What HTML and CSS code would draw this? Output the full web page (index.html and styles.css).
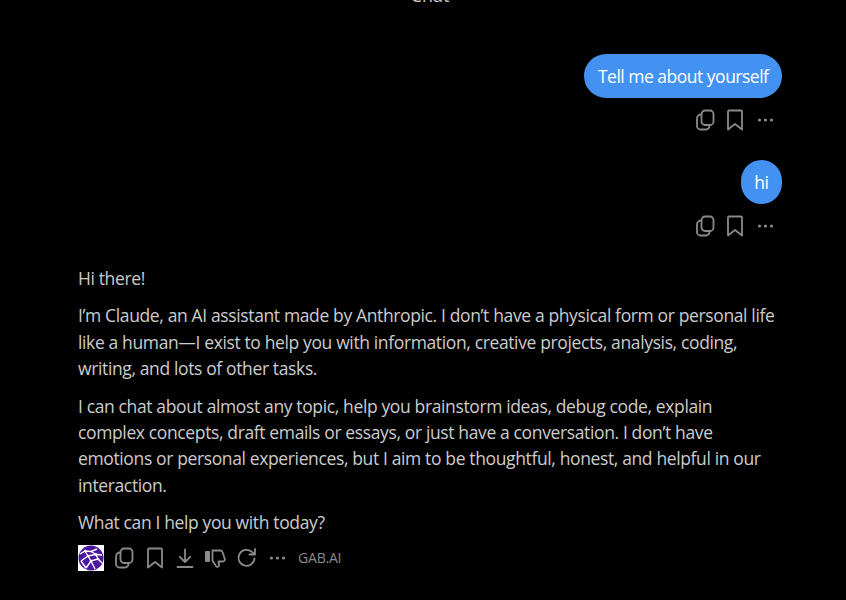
FILE: index.html
```html
<!DOCTYPE html>
<html lang="en">
    <head>
        <title>Chat</title>
        <link rel="stylesheet" href="styles.css">
    </head>
    <body>
        <svg class="defs" width="0" height="0">
            <symbol id="i-copy" viewBox="0 0 20 22">
                <rect x="6.5" y="1.5" width="12" height="14.5" rx="3.5"/>
                <path d="M6.5 5.500h-.5a4 4 0 0 0-4 4v7.500a3.500 3.500 0 0 0 3.500 3.500h5.500a3.500 3.500 0 0 0 3.500-3.500v-1"/>
            </symbol>
            <symbol id="i-mark" viewBox="0 0 18 22">
                <path d="M2 2.500a1 1 0 0 1 1-1h12a1 1 0 0 1 1 1v18l-7-5.500-7 5.500z"/>
            </symbol>
            <symbol id="i-dots" viewBox="0 0 18 6">
                <circle class="solid" cx="3.500" cy="3" r="1.600"/>
                <circle class="solid" cx="9.500" cy="3" r="1.600"/>
                <circle class="solid" cx="15.500" cy="3" r="1.600"/>
            </symbol>
            <symbol id="i-down" viewBox="0 0 18 22">
                <path d="M9 2.500v12M3.800 9.800 9 15l5.200-5.200M1.500 20h15"/>
            </symbol>
            <symbol id="i-thumb" viewBox="0 0 22 22">
                <rect class="solid" x="1" y="4" width="5" height="11" rx="1"/>
                <path d="M8.500 3.500h7.500a2.500 2.500 0 0 1 2.500 1.500l2.300 7a2 2 0 0 1-2 2.500h-4.300l.6 3.500c.2 1.500-1.900 2.600-2.900 1.300l-3.700-5.500v-10.300"/>
            </symbol>
            <symbol id="i-redo" viewBox="0 0 22 22">
                <path d="M18.500 11.500a8 8 0 1 1-2.800-6.800l2.800 2.500M19 2v5.500h-5.500"/>
            </symbol>
        </svg>

        <main class="chat">
            <h1 class="title">Chat</h1>

            <div class="user-msg">
                <p class="bubble">Tell me about yourself</p>
                <div class="actions">
                    <svg class="icon icon-copy"><use href="#i-copy"/></svg>
                    <svg class="icon icon-mark"><use href="#i-mark"/></svg>
                    <svg class="icon icon-dots"><use href="#i-dots"/></svg>
                </div>
            </div>

            <div class="user-msg">
                <p class="bubble">hi</p>
                <div class="actions">
                    <svg class="icon icon-copy"><use href="#i-copy"/></svg>
                    <svg class="icon icon-mark"><use href="#i-mark"/></svg>
                    <svg class="icon icon-dots"><use href="#i-dots"/></svg>
                </div>
            </div>

            <div class="reply">
                <p>Hi there!</p>
                <p>I’m Claude, an AI assistant made by Anthropic. I don’t have a physical form or personal life<br>like a human—I exist to help you with information, creative projects, analysis, coding,<br>writing, and lots of other tasks.</p>
                <p>I can chat about almost any topic, help you brainstorm ideas, debug code, explain<br>complex concepts, draft emails or essays, or just have a conversation. I don’t have<br>emotions or personal experiences, but I aim to be thoughtful, honest, and helpful in our<br>interaction.</p>
                <p>What can I help you with today?</p>
            </div>

            <div class="reply-actions">
                <svg class="avatar" viewBox="0 0 26 26">
                    <rect width="26" height="26" fill="#fff"/>
                    <circle cx="13" cy="13" r="12.500" fill="#4a16a0"/>
                    <path d="M2 9 7 6l6 .5L19 4M7 6l3 5 8-1.500 6 .5M13 6.500l5 3M10 11l-7 5M10 11l3 5 7-2-2-4.500M20 14l4 4M13 16l-5 7M13 16l4 8M3 16l5 7" fill="none" stroke="#fff" stroke-width="1.400"/>
                    <circle cx="7" cy="6" r="1.300" fill="#fff"/>
                    <circle cx="18" cy="9.500" r="1.300" fill="#fff"/>
                    <circle cx="10" cy="11" r="1.300" fill="#fff"/>
                    <circle cx="13" cy="16" r="1.300" fill="#fff"/>
                    <circle cx="20" cy="14" r="1.300" fill="#fff"/>
                </svg>
                <svg class="icon icon-copy"><use href="#i-copy"/></svg>
                <svg class="icon icon-mark"><use href="#i-mark"/></svg>
                <svg class="icon icon-down"><use href="#i-down"/></svg>
                <svg class="icon icon-thumb"><use href="#i-thumb"/></svg>
                <svg class="icon icon-redo"><use href="#i-redo"/></svg>
                <svg class="icon icon-dots"><use href="#i-dots"/></svg>
                <span class="source">GAB.AI</span>
            </div>
        </main>
    </body>
</html>
```

FILE: styles.css
```css
* {
    box-sizing: border-box;
}

body {
    margin: 0;
    height: 600px;
    overflow: hidden;
    background: #000;
    color: #cccccc;
    font-family: "Open Sans", "Noto Sans", sans-serif;
    font-size: 17.5px;
}

.defs {
    display: block;
    height: 0;
}

/* Page column */
.chat {
    display: flex;
    flex-direction: column;
    padding: 0 64px 0 78px;
}

.title {
    margin: -17px 0 47px 0;
    height: 24px;
    text-align: center;
    font-size: 18px;
    line-height: 24px;
    font-weight: 400;
}

/* User messages */
.user-msg {
    display: flex;
    flex-direction: column;
    align-items: flex-end;
    margin-bottom: 29px;
}

.user-msg + .reply {
    margin-top: -1px;
}

.bubble {
    margin: 0;
    height: 44px;
    padding: 0 13.5px;
    border-radius: 22px;
    background: #4392f1;
    color: #fff;
    line-height: 44px;
    letter-spacing: -0.5px;
    white-space: nowrap;
}

.actions {
    display: flex;
    align-items: center;
    gap: 12px;
    height: 22px;
    margin-top: 11px;
    margin-right: 8px;
}

.actions .icon-copy {
    margin-right: -1px;
}

/* Icons */
.icon {
    flex: none;
    fill: none;
    stroke: #8a8a8a;
    stroke-width: 1.8;
    stroke-linecap: round;
    stroke-linejoin: round;
}

.solid {
    fill: #8a8a8a;
    stroke: none;
}

.icon-copy {
    width: 20px;
    height: 22px;
}

.icon-mark {
    width: 18px;
    height: 22px;
}

.icon-dots {
    width: 18px;
    height: 6px;
}

.icon-down {
    width: 18px;
    height: 22px;
}

.icon-thumb,
.icon-redo {
    width: 22px;
    height: 22px;
}

/* Assistant reply */
.reply {
    line-height: 26.4px;
    letter-spacing: -0.37px;
}

.reply p {
    margin: 0 0 11px 0;
    white-space: nowrap;
}

.reply p:last-child {
    margin-bottom: 8px;
}

.reply-actions {
    display: flex;
    align-items: center;
    gap: 12px;
    height: 28px;
}

.avatar {
    width: 26px;
    height: 26px;
    flex: none;
    margin-right: -2px;
}

.reply-actions .icon-thumb,
.reply-actions .icon-redo,
.reply-actions .icon-dots {
    margin-left: -2px;
}

.source {
    color: #8a8a8a;
    font-size: 14px;
    letter-spacing: -0.2px;
}
```
